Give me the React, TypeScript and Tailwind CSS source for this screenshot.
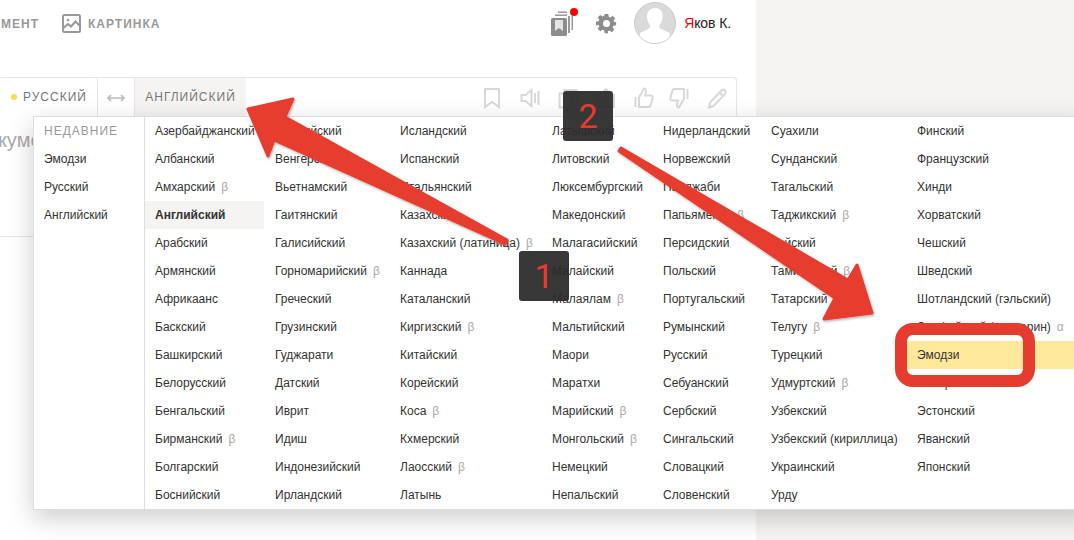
import React from 'react';

type Lang = { name: string; mark?: string };

const parse = (list: string[]): Lang[] =>
  list.map((s) => {
    const mark = s.endsWith(' β') ? 'β' : s.endsWith(' α') ? 'α' : undefined;
    return { name: mark ? s.slice(0, -2) : s, mark };
  });

const columns: { width: string; items: Lang[] }[] = [
  { width: 'w-[120px]', items: parse(['Азербайджанский', 'Албанский', 'Амхарский β', 'Английский', 'Арабский', 'Армянский', 'Африкаанс', 'Баскский', 'Башкирский', 'Белорусский', 'Бенгальский', 'Бирманский β', 'Болгарский', 'Боснийский']) },
  { width: 'w-[125px]', items: parse(['Валлийский', 'Венгерский', 'Вьетнамский', 'Гаитянский', 'Галисийский', 'Горномарийский β', 'Греческий', 'Грузинский', 'Гуджарати', 'Датский', 'Иврит', 'Идиш', 'Индонезийский', 'Ирландский']) },
  { width: 'w-[152px]', items: parse(['Исландский', 'Испанский', 'Итальянский', 'Казахский', 'Казахский (латиница) β', 'Каннада', 'Каталанский', 'Киргизский β', 'Китайский', 'Корейский', 'Коса β', 'Кхмерский', 'Лаосский β', 'Латынь']) },
  { width: 'w-[111px]', items: parse(['Латышский', 'Литовский', 'Люксембургский', 'Македонский', 'Малагасийский', 'Малайский', 'Малаялам β', 'Мальтийский', 'Маори', 'Маратхи', 'Марийский β', 'Монгольский β', 'Немецкий', 'Непальский']) },
  { width: 'w-[108px]', items: parse(['Нидерландский', 'Норвежский', 'Панджаби', 'Папьяменто β', 'Персидский', 'Польский', 'Португальский', 'Румынский', 'Русский', 'Себуанский', 'Сербский', 'Сингальский', 'Словацкий', 'Словенский']) },
  { width: 'w-[146px]', items: parse(['Суахили', 'Сунданский', 'Тагальский', 'Таджикский β', 'Тайский', 'Тамильский β', 'Татарский', 'Телугу β', 'Турецкий', 'Удмуртский β', 'Узбекский', 'Узбекский (кириллица)', 'Украинский', 'Урду']) },
  { width: 'w-[167px]', items: parse(['Финский', 'Французский', 'Хинди', 'Хорватский', 'Чешский', 'Шведский', 'Шотландский (гэльский)', 'Эльфийский (синдарин) α', 'Эмодзи', 'Эсперанто', 'Эстонский', 'Яванский', 'Японский']) },
];

const LangRow = ({ lang }: { lang: Lang }) => {
  const active = lang.name === 'Английский';
  const picked = lang.name === 'Эмодзи';
  return (
    <div className={`h-[28px] pl-[10px] leading-[28px] whitespace-nowrap ${active ? 'w-[119px] bg-[#f5f4f2] font-bold' : ''} ${picked ? '-ml-[1px] pl-[11px] bg-[#ffe899]' : ''}`}>
      {lang.name}
      {lang.mark && <span className="ml-[6px] text-[#aaa]">{lang.mark}</span>}
    </div>
  );
};

const LangMenu = () => (
  <div className="absolute left-[33px] top-[116px] flex w-[1060px] h-[394px] border border-[#ddd] bg-white text-[12px] text-[#333] shadow-[0_8px_24px_rgba(0,0,0,0.2)]">
    <div className="w-[111px] shrink-0 border-r border-[#ddd] pl-[10px]">
      <div className="h-[28px] leading-[28px] tracking-[1px] text-[#999]">НЕДАВНИЕ</div>
      {['Эмодзи', 'Русский', 'Английский'].map((r) => (
        <div key={r} className="h-[28px] leading-[28px]">{r}</div>
      ))}
    </div>
    {columns.map((col, i) => (
      <div key={i} className={`${col.width} shrink-0`}>
        {col.items.map((l) => <LangRow key={l.name} lang={l} />)}
      </div>
    ))}
  </div>
);

const ToolIcons = () => (
  <div className="flex items-center gap-[18px] pr-[9px] text-[#d8d8d8]">
    <svg className="-ml-[2px]" width="20" height="22" viewBox="0 0 20 22" fill="none" stroke="currentColor" strokeWidth="2">
      <path d="M3 2h14v18l-7-5-7 5z" />
    </svg>
    <svg width="20" height="22" viewBox="0 0 20 22" fill="none" stroke="currentColor" strokeWidth="2">
      <path d="M1.500 8v6h4l6 5V3l-6 5zM15 6v10M18.500 4v14" />
    </svg>
    <svg width="20" height="22" viewBox="0 0 20 22" fill="none" stroke="currentColor" strokeWidth="2">
      <path d="M1.500 6.500h13v14h-13zM5 3h13.500v14" />
    </svg>
    <svg width="20" height="22" viewBox="0 0 20 22" fill="none" stroke="currentColor" strokeWidth="2">
      <path d="M6 8H2v12h16V8h-4M10 14V2M6.500 5.500 10 2l3.500 3.500" />
    </svg>
    <svg width="20" height="22" viewBox="0 0 20 22" fill="none" stroke="currentColor" strokeWidth="2">
      <path d="M1.500 10v10M5 10.500l5-9c2 0 2.500 2 2 3.500l-1 3.500h6c1.500 0 2 1.500 1.500 3l-2 7c-.3 1-1 1.500-2 1.500H5z" />
    </svg>
    <svg className="-ml-[3px]" width="20" height="22" viewBox="0 0 20 22" fill="none" stroke="currentColor" strokeWidth="2">
      <path d="M18.500 12V2M15 11.500l-5 9c-2 0-2.500-2-2-3.500l1-3.500H3c-1.500 0-2-1.500-1.500-3l2-7c.3-1 1-1.500 2-1.500H15z" />
    </svg>
    <svg width="20" height="22" viewBox="0 0 20 22" fill="none" stroke="currentColor" strokeWidth="2">
      <path d="M2 20.500l1-5L14.500 3.500c1-1 2.500-1 3.500 0s1 2.500 0 3.500L6.500 19zM12.500 5.500l4 4" />
    </svg>
  </div>
);

// red annotations drawn over the screenshot
const Annotations = () => (
  <>
    <svg className="absolute left-0 top-0 pointer-events-none" width="1074" height="540" viewBox="0 0 1074 540">
      <defs>
        <filter id="sh" x="-5%" y="-5%" width="110%" height="110%">
          <feDropShadow dx="1" dy="1.500" stdDeviation="0.800" floodColor="#000" floodOpacity="0.3" />
        </filter>
      </defs>
      <g fill="#e63c2f" stroke="#e63c2f" strokeWidth="3" strokeLinejoin="round" filter="url(#sh)">
        <path d="M248 109 293 99 285 117 507 240 505 244 274 140 268 156Z" />
        <path d="M621 148 848 280 857 265 872 313 824 319 835 298 619 151Z" />
      </g>
    </svg>
    <div className="absolute left-[519px] top-[251px] flex h-[50px] w-[50px] items-center justify-center rounded-[3px] bg-[#2c2c2c]/95 font-['Roboto',sans-serif] text-[34px] text-[#e63c2f]">1</div>
    <div className="absolute left-[563px] top-[91px] flex h-[50px] w-[50px] items-center justify-center rounded-[3px] bg-[#2c2c2c]/95 font-['Roboto',sans-serif] text-[34px] text-[#e63c2f]">2</div>
    <div className="absolute left-[895px] top-[323px] h-[64px] w-[140px] rounded-[18px] border-[12px] border-[#e63c2f]" />
  </>
);

export default function App() {
  return (
    <div className="relative flex h-[540px] w-[1074px] overflow-hidden bg-white font-['Liberation_Sans',Arial,sans-serif]">
      <div className="w-[756px] shrink-0">
        <header className="flex h-[46px] items-center justify-between pr-[25px]">
          <div className="flex items-center pt-[2px] text-[12px] font-bold tracking-[1px] text-[#999]">
            <span className="-ml-[36px]">ДОКУМЕНТ</span>
            <svg className="ml-[23px] -mt-[1px]" width="19" height="19" viewBox="0 0 19 19" fill="none" stroke="#999" strokeWidth="2">
              <rect x="1" y="1" width="17" height="17" rx="1.500" />
              <path d="M1.500 14 6 10l3 2.500 4.500-5 4 4" />
              <circle cx="6" cy="6" r="1.300" fill="#999" stroke="none" />
            </svg>
            <span className="ml-[7px]">КАРТИНКА</span>
          </div>
          <div className="flex items-center">
            <div className="relative h-[26px] w-[23px]">
              <svg width="23" height="26" viewBox="0 0 23 26">
                <path d="M4 6V4.500h12V6zM7 3V1.500h9V3zM17 6h2v17h-2zM20.500 6H22v14h-1.500z" fill="#999" />
                <rect x="0" y="8" width="16" height="18" rx="1.500" fill="#8c8c8c" />
                <path d="M4 10h8v11l-4-3-4 3z" fill="#e4e4e4" />
              </svg>
              <span className="absolute -right-[4px] -top-[2px] h-[8px] w-[8px] rounded-full bg-[#f00]" />
            </div>
            <svg className="ml-[22px]" width="21" height="21" viewBox="0 0 24 24" fill="#8c8c8c">
              <path fillRule="evenodd" d="M10 1h4l.6 3.200 1.800.8 2.700-1.800 2.800 2.800-1.800 2.700.7 1.800L23 10v4l-3.200.6-.7 1.800 1.800 2.700-2.800 2.800-2.700-1.800-1.800.7L13.900 23h-4l-.6-3.200-1.800-.7-2.700 1.800-2.800-2.800 1.800-2.700-.7-1.800L0 14v-4l3.100-.5.700-1.800L2 5l2.800-2.800 2.700 1.800 1.800-.8zM12 8a4 4 0 1 0 0 8 4 4 0 0 0 0-8z" />
            </svg>
            <div className="ml-[17px] relative h-[42px] w-[42px] overflow-hidden rounded-full border border-[#ccc] bg-[#dadada]">
              <svg width="40" height="40" viewBox="0 0 40 40" fill="#fff">
                <path d="M20 5c5 0 8 3 7.500 9-.3 4-2 7-3 8v3l10 5v10H5V30l10-5v-3c-1.500-1.500-3-5-3-9 0-5 4-8 8-8z" />
              </svg>
            </div>
            <span className="ml-[8px] text-[14px] -tracking-[0.1px] text-[#222]"><span className="text-[#f00]">Я</span>ков К.</span>
          </div>
        </header>
        <div className="mt-[31px] mr-[19px] -ml-[2px] flex h-[40px] items-stretch rounded-t-[4px] border border-b-0 border-[#e5e5e5]">
          <div className="flex items-center border-r border-[#e5e5e5] rounded-tr-[4px] w-[99px] pb-[2px] pl-[12px] text-[12px] tracking-[1px] text-[#777]">
            <span className="h-[6px] w-[6px] rounded-full bg-[#ffd84d]" />
            <span className="ml-[6px]">РУССКИЙ</span>
          </div>
          <svg className="mx-[8px] self-center" width="20" height="10" viewBox="0 0 20 10" fill="none" stroke="#bbb" strokeWidth="1.600">
            <path d="M2 5h16M5 2 2 5l3 3M15 2l3 3-3 3" />
          </svg>
          <div className="flex w-[112px] items-center justify-center border-l border-[#e5e5e5] bg-[#f5f4f2] pb-[2px] text-[12px] tracking-[1px] text-[#777]">АНГЛИЙСКИЙ</div>
          <div className="flex flex-1 items-center justify-end"><ToolIcons /></div>
        </div>
        <div className="h-[120px] border-b border-[#e5e5e5] pt-[8px] -ml-[27px] text-[20px] text-[#aaa]">Документ</div>
      </div>
      <div className="flex-1 bg-[#f5f4f2]" />
      <LangMenu />
      <Annotations />
    </div>
  );
}
